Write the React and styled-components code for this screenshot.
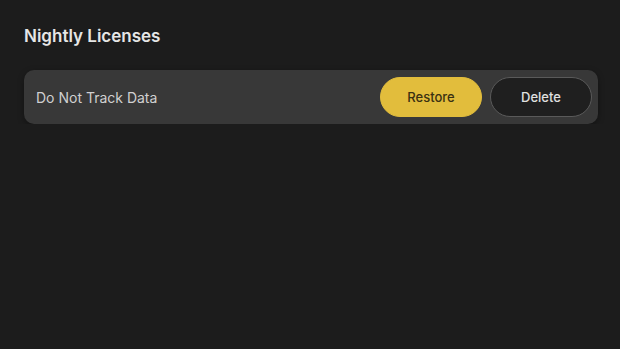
import styled, { createGlobalStyle } from "styled-components";

const Global = createGlobalStyle`
  html, body {
    margin: 0;
    background: #1c1c1c;
    font-family: "Inter", "Liberation Sans", sans-serif;
  }
`;

const Page = styled.div`
  padding: 24px 22px 0 24px;
  display: flex;
  flex-direction: column;
  gap: 22px;
`;

const Title = styled.h2`
  margin: 0;
  font-size: 17px;
  font-weight: 600;
  color: #e6e6e6;
  line-height: 24px;
`;

const Row = styled.div`
  display: flex;
  align-items: center;
  gap: 8px;
  height: 54px;
  padding: 0 6px 0 12px;
  background: #383838;
  border-radius: 10px;
  box-shadow: 0 2px 6px rgba(0, 0, 0, 0.35);
`;

const Label = styled.span`
  flex: 1;
  font-size: 14px;
  color: #d0d0d0;
`;

const Button = styled.button`
  width: 102px;
  height: 40px;
  border-radius: 999px;
  font-family: inherit;
  font-size: 13px;
  font-weight: 500;
  cursor: pointer;
  border: 1px solid ${({ $primary }) => ($primary ? "#e2bd3c" : "#5a5a5a")};
  background: ${({ $primary }) => ($primary ? "#e2bd3c" : "#1f1f1f")};
  color: ${({ $primary }) => ($primary ? "#3a3112" : "#e0e0e0")};
`;

export default function App() {
  return (
    <>
      <Global />
      <Page>
        <Title>Nightly Licenses</Title>
        <Row>
          <Label>Do Not Track Data</Label>
          <Button $primary>Restore</Button>
          <Button>Delete</Button>
        </Row>
      </Page>
    </>
  );
}
